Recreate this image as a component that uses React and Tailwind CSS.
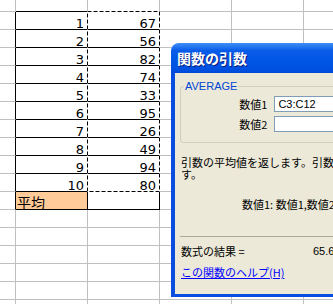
import React from 'react';

const colW = [16, 72, 72, 72, 72, 72];
const values = [67, 56, 82, 74, 33, 95, 26, 49, 94, 80];

const GRAY = '#c0c0c0';

function cellBorders(r, c) {
  // returns [rightColor, bottomColor]
  let right = GRAY;
  let bottom = GRAY;
  if (c === 0 && r >= 1 && r <= 11) right = '#000';
  if (r === 0 && (c === 1 || c === 2)) bottom = '#000';
  if ((c === 1 || c === 2) && r >= 1 && r <= 11) {
    right = '#000';
    bottom = '#000';
  }
  return [right, bottom];
}

const Cell = ({ r, c, h }) => {
  const [right, bottom] = cellBorders(r, c);
  let content = null;
  let bg = 'bg-white';
  if (r >= 1 && r <= 10 && c === 1) content = r;
  if (r >= 1 && r <= 10 && c === 2) content = values[r - 1];
  if (r === 11 && c === 1) bg = 'bg-[#ffcc99]';
  return (
    <div
      className={`shrink-0 border-r border-b flex items-end ${bg} ${
        r === 11 && c === 1 ? 'justify-start' : 'justify-end'
      }`}
      style={{ width: colW[c], height: h, borderRightColor: right, borderBottomColor: bottom }}
    >
      {content !== null && (
        <span className="pr-[3px] text-[13px] leading-[11px] text-black font-['DejaVu_Sans',sans-serif]">
          {content}
        </span>
      )}
      {r === 11 && c === 1 && (
        <span className="pl-[1px] text-[14px] leading-[14px] text-black font-['Noto_Sans_CJK_JP',sans-serif]">
          平均
        </span>
      )}
    </div>
  );
};

const Sheet = () => {
  const rows = Array.from({ length: 18 }, (_, i) => i);
  return (
    <div className="flex flex-col">
      {rows.map((r) => (
        <div key={r} className="flex">
          {colW.map((_, c) => (
            <Cell key={c} r={r} c={c} h={r === 0 ? 12 : 18} />
          ))}
        </div>
      ))}
    </div>
  );
};

const Dialog = () => (
  <div className="absolute left-[171px] top-[43px] w-[220px] h-[254px] flex flex-col rounded-tl-[8px] overflow-hidden font-['Noto_Sans_CJK_JP',sans-serif]">
    <div className="h-[30px] shrink-0 flex items-center pl-[6px] bg-[linear-gradient(180deg,#3d8cf5_0%,#2a7cf2_10%,#0a5de8_25%,#0055e5_60%,#0050e0_90%,#0048d8_100%)]">
      <span className="text-white font-bold text-[14px] leading-none tracking-[0px] [text-shadow:1px_1px_0_#0a1c80]">
        関数の引数
      </span>
    </div>
    <div className="flex-1 flex flex-col bg-[#ece9d8] border-l-4 border-b-[3px] border-[#0a4ee0] text-[11px] leading-[12px] text-black">
      <div className="relative mt-[13px] ml-[5px] border border-r-0 border-[#d0d0bf] rounded-l-[4px] pt-[9px] pb-[10px] flex flex-col gap-[4px]">
        <span className="absolute left-[3px] -top-[7px] px-[1px] bg-[#ece9d8] text-[#0046d5] text-[11px] leading-[13px] font-['Liberation_Sans',sans-serif]">
          AVERAGE
        </span>
        <div className="flex items-center">
          <span className="w-[89px] text-right">数値1</span>
          <div className="ml-[7px] w-[120px] h-[16px] border border-[#7f9db9] bg-white pl-[3px] flex items-center font-['Liberation_Sans',sans-serif] text-[11px]">
            C3:C12
          </div>
        </div>
        <div className="flex items-center">
          <span className="w-[89px] text-right">数値2</span>
          <div className="ml-[7px] w-[120px] h-[16px] border border-[#7f9db9] bg-white" />
        </div>
      </div>
      <div className="mt-[13px] pl-[6px] whitespace-nowrap">
        <div>引数の平均値を返します。引数には、数値、または数値を含む名前、配列、セル参照を指定しま</div>
        <div>す。</div>
      </div>
      <div className="mt-[18px] pl-[67px] whitespace-nowrap">数値1: 数値1,数値2,... には平均を求める数値を指定します。</div>
      <div className="mt-[26px] ml-[5px] border-t border-[#aca899]" />
      <div className="mt-[8px] pl-[6px] flex whitespace-nowrap">
        <span className="w-[132px]">数式の結果 =</span>
        <span className="font-['Liberation_Sans',sans-serif]">65.6</span>
      </div>
      <div className="mt-[9px] pl-[6px] whitespace-nowrap">
        <span className="text-[#0000ff] underline">この関数のヘルプ(H)</span>
      </div>
    </div>
  </div>
);

export default function App() {
  return (
    <div className="relative w-[333px] h-[304px] overflow-hidden bg-white">
      <Sheet />
      <svg className="absolute left-[87px] top-[11px]" width="73" height="181">
        <rect x="0.5" y="0.5" width="72" height="180" fill="none" stroke="#fff" strokeWidth="1" />
        <rect x="0.5" y="0.5" width="72" height="180" fill="none" stroke="#000" strokeWidth="1" strokeDasharray="4 2" />
      </svg>
      <Dialog />
    </div>
  );
}
